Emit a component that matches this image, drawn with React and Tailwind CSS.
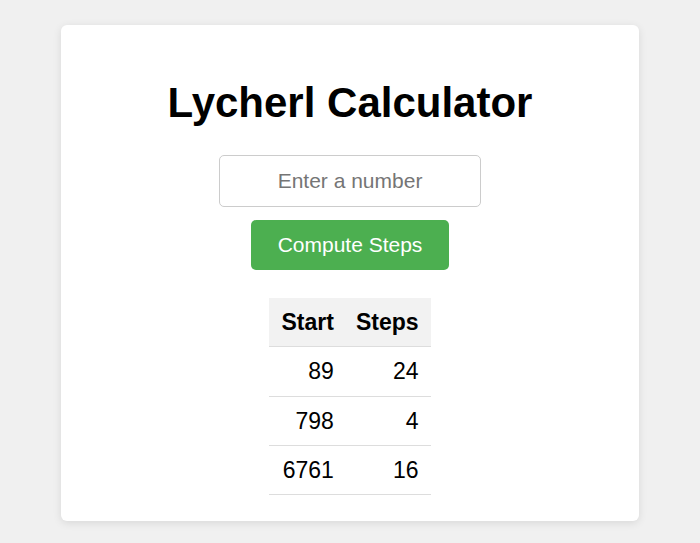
import React, { useState } from 'react';

const rows = [
  { start: 89, steps: 24 },
  { start: 798, steps: 4 },
  { start: 6761, steps: 16 },
];

export default function App() {
  const [value, setValue] = useState('');

  return (
    <div className="min-h-[543px] bg-[#f0f0f0] pt-[25px] font-['Liberation_Sans',Arial,sans-serif]">
      <div className="mx-auto flex w-[578px] flex-col items-center rounded-[6px] bg-white pt-[54px] pb-[26px] shadow-[0_2px_8px_rgba(0,0,0,0.1)]">
        <h1 className="m-0 text-[42px] font-bold leading-[48px] text-black">Lycherl Calculator</h1>
        <input
          type="text"
          value={value}
          onChange={(e) => setValue(e.target.value)}
          placeholder="Enter a number"
          className="mt-[28px] h-[52px] w-[262px] rounded-[5px] border border-[#ccc] text-center text-[21px] text-black outline-none placeholder:text-[#757575]"
        />
        <button
          type="button"
          className="mt-[13px] h-[50px] w-[198px] rounded-[5px] bg-[#4caf50] text-[21px] text-white"
        >
          Compute Steps
        </button>
        <table className="mt-[28px] border-collapse text-[23px] text-black">
          <thead>
            <tr className="border-b border-[#ddd] bg-[#f2f2f2]">
              <th className="py-[11px] pr-[11px] pl-[12px] text-right font-bold leading-[26.3px]">Start</th>
              <th className="py-[11px] pr-[12px] pl-[11px] text-right font-bold leading-[26.3px]">Steps</th>
            </tr>
          </thead>
          <tbody>
            {rows.map((r) => (
              <tr key={r.start} className="border-b border-[#ddd]">
                <td className="py-[11px] pr-[11px] pl-[12px] text-right leading-[26.3px]">{r.start}</td>
                <td className="py-[11px] pr-[12px] pl-[11px] text-right leading-[26.3px]">{r.steps}</td>
              </tr>
            ))}
          </tbody>
        </table>
      </div>
    </div>
  );
}
